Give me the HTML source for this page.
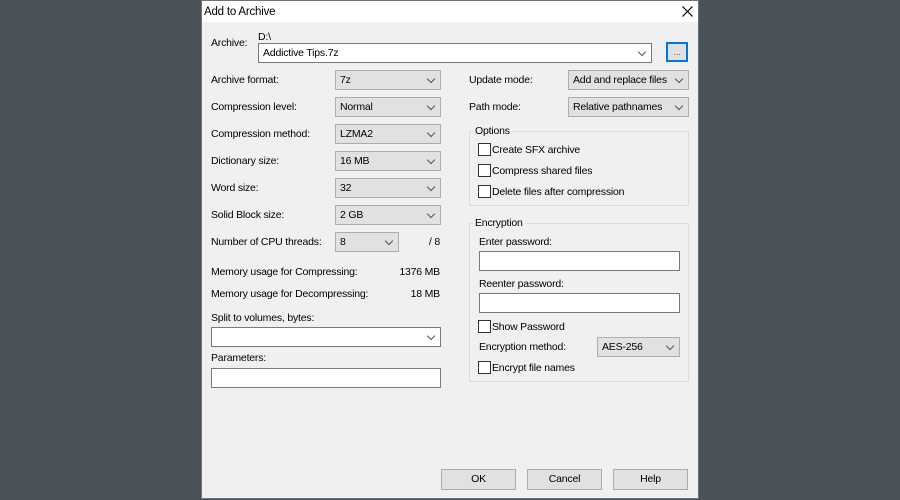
<!DOCTYPE html>
<html><head><style>
*{box-sizing:border-box;margin:0;padding:0}
body{width:900px;height:500px;background:#4c5358;position:relative;overflow:hidden;font-family:"Liberation Sans",Arial,sans-serif;font-size:10.5px;letter-spacing:-0.2px;color:#000}
.dlg{position:absolute;left:201px;top:0;width:498px;height:499px;background:#f0f0f0;border:1px solid #6e7478}
.title{position:absolute;left:0;top:0;width:100%;height:21px;background:#fff}
.a{position:absolute;white-space:nowrap;line-height:13px}
.r{text-align:right}
.cb{position:absolute;height:20px;background:#e1e1e1;border:1px solid #adadad;padding-left:4px;line-height:18px}
.cb.w{background:#fff;border-color:#7a7a7a}
.cb:after{content:"";position:absolute;right:6px;top:5px;width:5px;height:5px;border-right:1px solid #555;border-bottom:1px solid #555;transform:rotate(45deg)}
.tb{position:absolute;height:20px;background:#fff;border:1px solid #7a7a7a}
.chk{position:absolute;width:13px;height:13px;border:1px solid #333;background:#fff}
.grp{position:absolute;border:1px solid #dcdcdc}
.gl{position:absolute;background:#f0f0f0;padding:0 2px;line-height:13px}
.btn{position:absolute;height:21px;width:75px;background:#e1e1e1;border:1px solid #adadad;text-align:center;line-height:19px}
</style></head><body>
<div class="dlg">
<div class="title"></div>
<div class="a" style="left:2px;top:4px;font-size:11.5px;line-height:14px">Add to Archive</div>
<svg style="position:absolute;left:480px;top:5px" width="11" height="11"><path d="M0.5 0.5L10.5 10.5M10.5 0.5L0.5 10.5" stroke="#000" stroke-width="1.2"/></svg>

<div class="a" style="left:9px;top:36px">Archive:</div>
<div class="a" style="left:56px;top:30px">D:\</div>
<div class="cb w" style="left:56px;top:42px;width:394px">Addictive Tips.7z</div>
<div class="btn" style="left:464px;top:41px;width:22px;height:20px;border:2px solid #0078d7;line-height:16px;font-size:9px;color:#555">...</div>

<div class="a" style="left:9px;top:73px">Archive format:</div>
<div class="cb" style="left:133px;top:69px;width:106px">7z</div>
<div class="a" style="left:9px;top:100px">Compression level:</div>
<div class="cb" style="left:133px;top:96px;width:106px">Normal</div>
<div class="a" style="left:9px;top:127px">Compression method:</div>
<div class="cb" style="left:133px;top:123px;width:106px">LZMA2</div>
<div class="a" style="left:9px;top:154px">Dictionary size:</div>
<div class="cb" style="left:133px;top:150px;width:106px">16 MB</div>
<div class="a" style="left:9px;top:181px">Word size:</div>
<div class="cb" style="left:133px;top:177px;width:106px">32</div>
<div class="a" style="left:9px;top:208px">Solid Block size:</div>
<div class="cb" style="left:133px;top:204px;width:106px">2 GB</div>
<div class="a" style="left:9px;top:235px">Number of CPU threads:</div>
<div class="cb" style="left:133px;top:231px;width:64px">8</div>
<div class="a r" style="left:198px;width:40px;top:235px">/ 8</div>
<div class="a" style="left:9px;top:265px">Memory usage for Compressing:</div>
<div class="a r" style="left:178px;width:60px;top:265px">1376 MB</div>
<div class="a" style="left:9px;top:287px">Memory usage for Decompressing:</div>
<div class="a r" style="left:178px;width:60px;top:287px">18 MB</div>
<div class="a" style="left:9px;top:311px">Split to volumes, bytes:</div>
<div class="cb w" style="left:9px;top:326px;width:230px"></div>
<div class="a" style="left:9px;top:351px">Parameters:</div>
<div class="tb" style="left:9px;top:367px;width:230px"></div>

<div class="a" style="left:267px;top:73px">Update mode:</div>
<div class="cb" style="left:366px;top:69px;width:121px">Add and replace files</div>
<div class="a" style="left:267px;top:100px">Path mode:</div>
<div class="cb" style="left:366px;top:96px;width:121px">Relative pathnames</div>

<div class="grp" style="left:267px;top:130px;width:220px;height:75px"></div>
<div class="gl" style="left:271px;top:124px">Options</div>
<div class="chk" style="left:276px;top:142px"></div><div class="a" style="left:290px;top:143px">Create SFX archive</div>
<div class="chk" style="left:276px;top:163px"></div><div class="a" style="left:290px;top:164px">Compress shared files</div>
<div class="chk" style="left:276px;top:184px"></div><div class="a" style="left:290px;top:185px">Delete files after compression</div>

<div class="grp" style="left:267px;top:222px;width:220px;height:159px"></div>
<div class="gl" style="left:271px;top:216px">Encryption</div>
<div class="a" style="left:277px;top:235px">Enter password:</div>
<div class="tb" style="left:277px;top:250px;width:201px"></div>
<div class="a" style="left:277px;top:277px">Reenter password:</div>
<div class="tb" style="left:277px;top:292px;width:201px"></div>
<div class="chk" style="left:276px;top:319px"></div><div class="a" style="left:290px;top:320px">Show Password</div>
<div class="a" style="left:277px;top:340px">Encryption method:</div>
<div class="cb" style="left:395px;top:336px;width:83px">AES-256</div>
<div class="chk" style="left:276px;top:360px"></div><div class="a" style="left:290px;top:361px">Encrypt file names</div>

<div class="btn" style="left:239px;top:468px">OK</div>
<div class="btn" style="left:325px;top:468px">Cancel</div>
<div class="btn" style="left:411px;top:468px">Help</div>
</div>
</body></html>
